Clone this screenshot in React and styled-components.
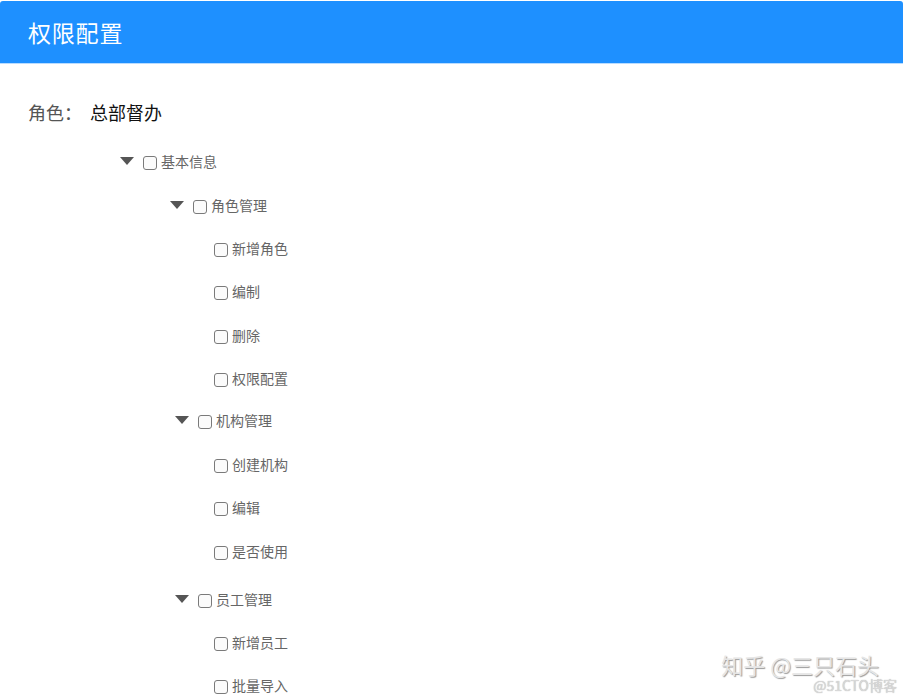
import React from "react"
import styled, { createGlobalStyle } from "styled-components"

const GlobalStyle = createGlobalStyle`
  html, body {
    margin: 0;
    padding: 0;
    background: #fff;
    overflow: hidden;
  }
  body {
    font-family: "Noto Sans CJK SC", "Noto Sans", sans-serif;
  }
`

const tree = [
  {
    label: "基本信息",
    children: [
      {
        label: "角色管理",
        extra: 1,
        children: [
          { label: "新增角色", extra: 0 },
          { label: "编制", extra: 0 },
          { label: "删除", extra: 1 },
          { label: "权限配置", extra: 0 },
        ],
      },
      {
        label: "机构管理",
        shift: 5,
        extra: -1,
        children: [
          { label: "创建机构", extra: 1 },
          { label: "编辑", extra: 0 },
          { label: "是否使用", extra: 1 },
        ],
      },
      {
        label: "员工管理",
        shift: 5,
        extra: 5,
        children: [
          { label: "新增员工", extra: 0 },
          { label: "批量导入", extra: 0 },
        ],
      },
    ],
  },
]

const TreeNode = ({ node, level }) => {
  const hasChildren = node.children && node.children.length > 0
  return (
    <>
      <Row $level={level} $shift={node.shift || 0} $extra={node.extra || 0}>
        {hasChildren && <Caret />}
        <Box />
        <Label>{node.label}</Label>
      </Row>
      {hasChildren &&
        node.children.map((c) => (
          <TreeNode key={c.label} node={c} level={level + 1} />
        ))}
    </>
  )
}

const App = () => {
  return (
    <Page>
      <GlobalStyle />
      <Header>
        <Title>权限配置</Title>
      </Header>
      <RoleLine>
        <RoleKey>角色：</RoleKey>
        <RoleValue>总部督办</RoleValue>
      </RoleLine>
      <Tree>
        {tree.map((n) => (
          <TreeNode key={n.label} node={n} level={0} />
        ))}
      </Tree>
      <Watermark>
        <span className="main">知乎 @三只石头</span>
        <span className="sub">@51CTO博客</span>
      </Watermark>
    </Page>
  )
}

const Page = styled.div`
  position: relative;
  width: 905px;
  height: 694px;
  overflow: hidden;
`

const Header = styled.header`
  display: flex;
  align-items: center;
  height: 62px;
  margin: 1px 2px 0 0;
  padding: 0 28px;
  background-color: #1e90ff;
  border-radius: 3px 3px 0 0;
  border-bottom: 1px solid #b9dcff;
`

const Title = styled.h1`
  margin: 0;
  font-size: 23px;
  font-weight: 400;
  color: #fff;
  letter-spacing: 0.8px;
`

const RoleLine = styled.div`
  display: flex;
  align-items: center;
  height: 26px;
  margin: 35px 0 0 28px;
  font-size: 18px;
`

const RoleKey = styled.span`
  color: #555;
  margin-right: 8px;
`

const RoleValue = styled.span`
  color: #111;
`

const Tree = styled.div`
  display: flex;
  flex-direction: column;
  margin-top: 14px;
`

const Row = styled.div`
  display: flex;
  align-items: center;
  height: 43px;
  margin-top: ${(p) => p.$extra}px;
  padding-left: ${(p) =>
    p.$level === 0 ? 120 : p.$level === 1 ? 170 + p.$shift : 214}px;
`

const Caret = styled.span`
  width: 0;
  height: 0;
  border-left: 7px solid transparent;
  border-right: 7px solid transparent;
  border-top: 8px solid #555;
  margin-right: 9px;
`

const Box = styled.span`
  box-sizing: border-box;
  width: 14px;
  height: 14px;
  margin-top: 4px;
  border: 1px solid #7a7a7a;
  border-radius: 3px;
  background: #fbfbfb;
  margin-right: 4px;
`

const Label = styled.span`
  font-size: 14px;
  color: #666;
  line-height: 20px;
`

const Watermark = styled.div`
  position: absolute;
  right: 8px;
  bottom: 0;
  display: flex;
  flex-direction: column;
  align-items: flex-end;
  pointer-events: none;

  .main {
    font-size: 22px;
    color: #e6e6e6;
    text-shadow: 1px 1px 1px #9a9a9a;
    margin-right: 18px;
    margin-bottom: 1px;
    line-height: 24px;
  }
  .sub {
    font-size: 14px;
    color: #d8d8d8;
    text-shadow: 0 0 1px #aaa;
    line-height: 17px;
  }
`

export default App
